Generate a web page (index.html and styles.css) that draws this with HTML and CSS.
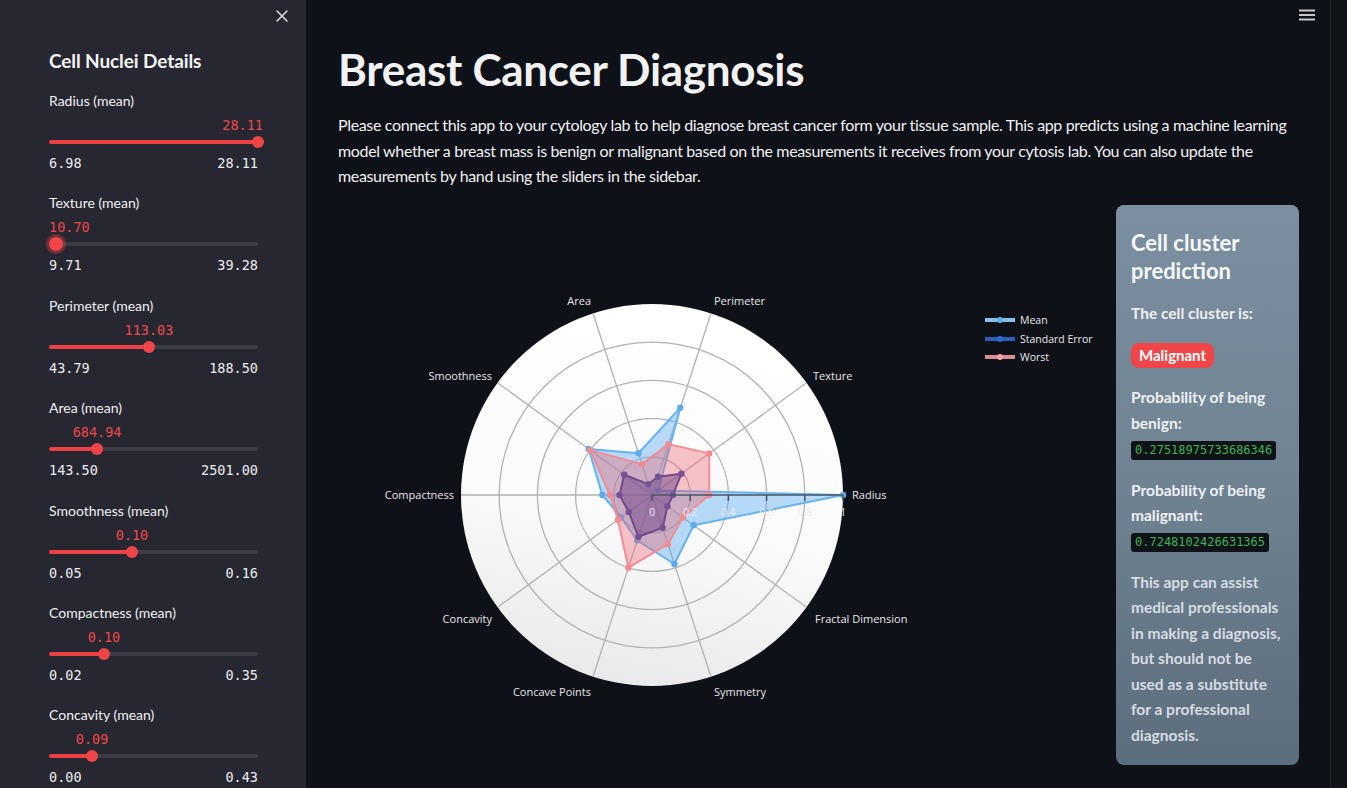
FILE: index.html
```html
<!DOCTYPE html>
<html lang="en">
<head>
<meta charset="utf-8">
<title>Breast Cancer Diagnosis</title>
<link rel="stylesheet" href="styles.css">
</head>
<body>
<div class="app">
  <aside class="sidebar">
    <div class="sidebar-head">
      <svg class="close-icon" width="14" height="14" viewBox="0 0 14 14"><path d="M2 2 L12 12 M12 2 L2 12" stroke="#d8d8dc" stroke-width="1.6" stroke-linecap="round"/></svg>
    </div>
    <div class="sidebar-body">
      <h2 class="sidebar-title">Cell Nuclei Details</h2>

      <div class="slider">
        <div class="slider-label">Radius (mean)</div>
        <div class="slider-value-row"><span class="slider-value at-end">28.11</span></div>
        <div class="track"><div class="track-rail"></div><div class="track-fill" style="width:100%"></div><div class="thumb" style="left:100%"></div></div>
        <div class="minmax"><span>6.98</span><span>28.11</span></div>
      </div>

      <div class="slider">
        <div class="slider-label">Texture (mean)</div>
        <div class="slider-value-row"><span class="slider-value at-start">10.70</span></div>
        <div class="track"><div class="track-rail"></div><div class="track-fill" style="width:3.3%"></div><div class="thumb focused" style="left:3.3%"></div></div>
        <div class="minmax"><span>9.71</span><span>39.28</span></div>
      </div>

      <div class="slider">
        <div class="slider-label">Perimeter (mean)</div>
        <div class="slider-value-row"><span class="slider-value" style="left:47.8%">113.03</span></div>
        <div class="track"><div class="track-rail"></div><div class="track-fill" style="width:47.8%"></div><div class="thumb" style="left:47.8%"></div></div>
        <div class="minmax"><span>43.79</span><span>188.50</span></div>
      </div>

      <div class="slider">
        <div class="slider-label">Area (mean)</div>
        <div class="slider-value-row"><span class="slider-value" style="left:23%">684.94</span></div>
        <div class="track"><div class="track-rail"></div><div class="track-fill" style="width:23%"></div><div class="thumb" style="left:23%"></div></div>
        <div class="minmax"><span>143.50</span><span>2501.00</span></div>
      </div>

      <div class="slider">
        <div class="slider-label">Smoothness (mean)</div>
        <div class="slider-value-row"><span class="slider-value" style="left:39.7%">0.10</span></div>
        <div class="track"><div class="track-rail"></div><div class="track-fill" style="width:39.7%"></div><div class="thumb" style="left:39.7%"></div></div>
        <div class="minmax"><span>0.05</span><span>0.16</span></div>
      </div>

      <div class="slider">
        <div class="slider-label">Compactness (mean)</div>
        <div class="slider-value-row"><span class="slider-value" style="left:26.3%">0.10</span></div>
        <div class="track"><div class="track-rail"></div><div class="track-fill" style="width:26.3%"></div><div class="thumb" style="left:26.3%"></div></div>
        <div class="minmax"><span>0.02</span><span>0.35</span></div>
      </div>

      <div class="slider">
        <div class="slider-label">Concavity (mean)</div>
        <div class="slider-value-row"><span class="slider-value" style="left:20.6%">0.09</span></div>
        <div class="track"><div class="track-rail"></div><div class="track-fill" style="width:20.6%"></div><div class="thumb" style="left:20.6%"></div></div>
        <div class="minmax"><span>0.00</span><span>0.43</span></div>
      </div>
    </div>
  </aside>

  <main class="main">
    <div class="topbar">
      <svg class="menu-icon" width="16" height="12" viewBox="0 0 16 12"><rect x="0" y="0.5" width="16" height="2" fill="#c8c8cc"/><rect x="0" y="5" width="16" height="2" fill="#c8c8cc"/><rect x="0" y="9.5" width="16" height="2" fill="#c8c8cc"/></svg>
    </div>
    <div class="content">
      <h1 class="title">Breast Cancer Diagnosis</h1>
      <p class="intro">Please connect this app to your cytology lab to help diagnose breast cancer form your tissue sample. This app predicts using a machine learning<br>model whether a breast mass is benign or malignant based on the measurements it receives from your cytosis lab. You can also update the<br>measurements by hand using the sliders in the sidebar.</p>

      <div class="columns">
        <div class="chart-col">
          <svg class="radar" width="762" height="560" viewBox="0 0 762 560">
            <defs>
              <linearGradient id="polarBg" x1="0.2" y1="0" x2="0" y2="1">
                <stop offset="0" stop-color="#ffffff"/>
                <stop offset="0.5" stop-color="#fafafa"/>
                <stop offset="1" stop-color="#e6e6e6"/>
              </linearGradient>
            </defs>
            <circle cx="314" cy="290" r="191" fill="url(#polarBg)"/>
            <g stroke="#b2b2b2" stroke-width="1.3" fill="none">
              <circle cx="314" cy="290" r="38.2"/>
              <circle cx="314" cy="290" r="76.4"/>
              <circle cx="314" cy="290" r="114.6"/>
              <circle cx="314" cy="290" r="152.8"/>
              <line x1="314" y1="290" x2="468.5" y2="177.7"/>
              <line x1="314" y1="290" x2="373" y2="108.3"/>
              <line x1="314" y1="290" x2="255" y2="108.3"/>
              <line x1="314" y1="290" x2="159.5" y2="177.7"/>
              <line x1="314" y1="290" x2="123" y2="290"/>
              <line x1="314" y1="290" x2="159.5" y2="402.3"/>
              <line x1="314" y1="290" x2="255" y2="471.7"/>
              <line x1="314" y1="290" x2="373" y2="471.7"/>
              <line x1="314" y1="290" x2="468.5" y2="402.3"/>
            </g>

            <!-- Mean -->
            <polygon points="505,290 320.2,285.5 342.3,202.8 300.4,248.2 250.7,244 264.3,290 283.1,312.5 299.2,335.4 336.4,359 355.7,320.3" fill="rgba(96,176,240,0.45)" stroke="#66b3ee" stroke-width="2" stroke-linejoin="round"/>
            <g fill="#5cacea">
              <circle cx="505" cy="290" r="3.2"/><circle cx="320.2" cy="285.5" r="3.2"/><circle cx="342.3" cy="202.8" r="3.2"/><circle cx="300.4" cy="248.2" r="3.2"/><circle cx="250.7" cy="244" r="3.2"/><circle cx="264.3" cy="290" r="3.2"/><circle cx="283.1" cy="312.5" r="3.2"/><circle cx="299.2" cy="335.4" r="3.2"/><circle cx="336.4" cy="359" r="3.2"/><circle cx="355.7" cy="320.3" r="3.2"/>
            </g>

            <!-- Standard Error -->
            <polygon points="335,290 343.4,268.7 319.9,271.8 310.4,279.1 286.2,269.8 281.5,290 290.8,306.9 300.4,331.8 324.6,322.7 329.5,301.2" fill="rgba(30,45,150,0.5)" stroke="#243a9a" stroke-width="2" stroke-linejoin="round"/>
            <g fill="#2a44a8">
              <circle cx="335" cy="290" r="3.2"/><circle cx="343.4" cy="268.7" r="3.2"/><circle cx="319.9" cy="271.8" r="3.2"/><circle cx="310.4" cy="279.1" r="3.2"/><circle cx="286.2" cy="269.8" r="3.2"/><circle cx="281.5" cy="290" r="3.2"/><circle cx="290.8" cy="306.9" r="3.2"/><circle cx="300.4" cy="331.8" r="3.2"/><circle cx="324.6" cy="322.7" r="3.2"/><circle cx="329.5" cy="301.2" r="3.2"/>
            </g>

            <!-- Worst -->
            <polygon points="371.3,290 371.2,248.4 330.5,239.1 304,259.1 252.2,245.1 272,290 280,314.7 290.4,362.7 329.9,339.1 344.9,312.5" fill="rgba(240,100,112,0.38)" stroke="#f28c94" stroke-width="2" stroke-linejoin="round"/>
            <g fill="#f48a92">
              <circle cx="371.3" cy="290" r="3.2"/><circle cx="371.2" cy="248.4" r="3.2"/><circle cx="330.5" cy="239.1" r="3.2"/><circle cx="304" cy="259.1" r="3.2"/><circle cx="252.2" cy="245.1" r="3.2"/><circle cx="272" cy="290" r="3.2"/><circle cx="280" cy="314.7" r="3.2"/><circle cx="290.4" cy="362.7" r="3.2"/><circle cx="329.9" cy="339.1" r="3.2"/><circle cx="344.9" cy="312.5" r="3.2"/>
            </g>

            <!-- radial axis -->
            <g stroke="#4a5564" stroke-width="1.5">
              <line x1="314" y1="290" x2="505" y2="290"/>
              <line x1="314" y1="290" x2="314" y2="296"/>
              <line x1="352.2" y1="290" x2="352.2" y2="296"/>
              <line x1="390.4" y1="290" x2="390.4" y2="296"/>
              <line x1="428.6" y1="290" x2="428.6" y2="296"/>
              <line x1="466.8" y1="290" x2="466.8" y2="296"/>
              <line x1="505" y1="290" x2="505" y2="296"/>
            </g>
            <g class="tick-label" text-anchor="middle">
              <text x="314" y="311">0</text>
              <text x="352.2" y="311">0.2</text>
              <text x="390.4" y="311">0.4</text>
              <text x="428.6" y="311">0.6</text>
              <text x="466.8" y="311">0.8</text>
              <text x="505" y="311">1</text>
            </g>

            <!-- angular labels -->
            <g class="axis-label">
              <text x="514" y="294">Radius</text>
              <text x="475" y="175">Texture</text>
              <text x="376" y="100">Perimeter</text>
              <text x="253" y="100" text-anchor="end">Area</text>
              <text x="154" y="175" text-anchor="end">Smoothness</text>
              <text x="116" y="294" text-anchor="end">Compactness</text>
              <text x="154" y="418" text-anchor="end">Concavity</text>
              <text x="253" y="491" text-anchor="end">Concave Points</text>
              <text x="376" y="491">Symmetry</text>
              <text x="477" y="418">Fractal Dimension</text>
            </g>

            <!-- legend -->
            <g class="legend">
              <rect x="647" y="113" width="30" height="4" fill="#86bfe9"/>
              <circle cx="662" cy="115" r="3" fill="#5cb2f0"/>
              <text x="682" y="119">Mean</text>
              <rect x="647" y="132" width="30" height="4" fill="#2f5fb5"/>
              <circle cx="662" cy="134" r="3" fill="#2a6ad8"/>
              <text x="682" y="138">Standard Error</text>
              <rect x="647" y="150" width="30" height="4" fill="#d98c94"/>
              <circle cx="662" cy="152" r="3" fill="#f4a2aa"/>
              <text x="682" y="156">Worst</text>
            </g>
          </svg>
        </div>

        <section class="card">
          <h3 class="card-title">Cell cluster<br>prediction</h3>
          <p class="card-text first">The cell cluster is:</p>
          <span class="badge">Malignant</span>
          <p class="card-text">Probability of being<br>benign:</p>
          <code class="prob">0.27518975733686346</code>
          <p class="card-text second">Probability of being<br>malignant:</p>
          <code class="prob">0.7248102426631365</code>
          <p class="card-note">This app can assist<br>medical professionals<br>in making a diagnosis,<br>but should not be<br>used as a substitute<br>for a professional<br>diagnosis.</p>
        </section>
      </div>
    </div>
  </main>
  <div class="scroll-strip"></div>
</div>
</body>
</html>
```

FILE: styles.css
```css
* {
  box-sizing: border-box;
  margin: 0;
  padding: 0;
}

html, body {
  height: 100%;
}

body {
  background: #0e1117;
  color: #fafafa;
  font-family: "Lato", "Liberation Sans", sans-serif;
  overflow: hidden;
}

.app {
  display: flex;
  height: 788px;
}

/* ---------- sidebar ---------- */
.sidebar {
  width: 306px;
  flex: none;
  background: #262730;
}

.sidebar-head {
  height: 32px;
  display: flex;
  justify-content: flex-end;
  align-items: center;
  padding-right: 17px;
}

.sidebar-body {
  padding: 0 48px 0 49px;
}

.sidebar-title {
  font-size: 19px;
  font-weight: 700;
  line-height: 26px;
  margin-top: 16px;
  margin-bottom: 17px;
  color: #f4f4f6;
  letter-spacing: -0.1px;
}

.slider {
  margin-bottom: 20.4px;
}

.slider-label {
  font-size: 14px;
  line-height: 20px;
  color: #f0f0f2;
}

.slider-value-row {
  position: relative;
  height: 20px;
  margin-top: 4px;
}

.slider-value {
  position: absolute;
  top: 0;
  transform: translateX(-50%);
  font-family: "DejaVu Sans Mono", "Liberation Mono", monospace;
  font-size: 13.5px;
  line-height: 20px;
  color: #f0474a;
  white-space: nowrap;
}

.slider-value.at-start {
  left: 0;
  transform: none;
}

.slider-value.at-end {
  right: -5px;
  transform: none;
}

.track {
  position: relative;
  height: 14px;
}

.track-rail {
  position: absolute;
  left: 0;
  right: 0;
  top: 5px;
  height: 4px;
  border-radius: 2px;
  background: #3c3d46;
}

.track-fill {
  position: absolute;
  left: 0;
  top: 5px;
  height: 4px;
  border-radius: 2px;
  background: #ee4146;
}

.thumb {
  position: absolute;
  top: 1px;
  width: 12px;
  height: 12px;
  border-radius: 50%;
  background: #f04449;
  transform: translateX(-50%);
}

.thumb.focused {
  top: 0;
  width: 14px;
  height: 14px;
  box-shadow: 0 0 0 3px rgba(240, 68, 73, 0.35);
}

.minmax {
  display: flex;
  justify-content: space-between;
  margin-top: 4px;
  font-family: "DejaVu Sans Mono", "Liberation Mono", monospace;
  font-size: 13.5px;
  line-height: 20px;
  color: #ececef;
}

/* ---------- main ---------- */
.main {
  flex: 1;
  min-width: 0;
  display: flex;
  flex-direction: column;
}

.topbar {
  height: 30px;
  display: flex;
  justify-content: flex-end;
  align-items: center;
  padding-right: 15px;
}

.content {
  padding: 0 31px 0 32px;
}

.title {
  font-size: 44px;
  font-weight: 700;
  line-height: 53px;
  margin-top: 13px;
  color: #f2f2f4;
  letter-spacing: -0.3px;
}

.intro {
  margin-top: 16px;
  font-size: 16px;
  line-height: 25.6px;
  letter-spacing: -0.35px;
  color: #f0f0f2;
  white-space: nowrap;
}

.columns {
  display: flex;
  margin-top: 16px;
}

.chart-col {
  flex: 1;
  min-width: 0;
}

.radar {
  display: block;
}

.axis-label text {
  font-family: "Open Sans", "Liberation Sans", sans-serif;
  font-size: 11px;
  fill: #e6e6e8;
}

.tick-label text {
  font-family: "Open Sans", "Liberation Sans", sans-serif;
  font-size: 10px;
  fill: #ececec;
}

.legend text {
  font-family: "Open Sans", "Liberation Sans", sans-serif;
  font-size: 10.5px;
  fill: #e8e8ea;
}

/* ---------- prediction card ---------- */
.card {
  width: 183px;
  height: 560px;
  flex: none;
  border-radius: 8px;
  background: linear-gradient(180deg, #7b8fa0 0%, #6f8393 50%, #5c6d7c 100%);
  padding: 24px 10px 0 15px;
  display: flex;
  flex-direction: column;
  align-items: flex-start;
}

.card-title {
  font-size: 22px;
  font-weight: 700;
  line-height: 28px;
  color: #f7f8f9;
}

.card-text {
  font-size: 15.5px;
  font-weight: 700;
  line-height: 25.6px;
  color: #eef0f2;
  margin-top: 17px;
  white-space: nowrap;
}

.card-text.first {
  margin-top: 16px;
}

.card-text.second {
  margin-top: 18px;
}

.badge {
  display: inline-block;
  margin-top: 17px;
  height: 25px;
  line-height: 25px;
  padding: 0 8px;
  border-radius: 8px;
  background: #f04649;
  color: #fff;
  font-size: 15px;
  font-weight: 700;
}

.prob {
  display: inline-block;
  margin-top: 4px;
  height: 19px;
  line-height: 19px;
  padding: 0 4px;
  border-radius: 3px;
  background: #0f1216;
  color: #3cb35a;
  font-family: "DejaVu Sans Mono", "Liberation Mono", monospace;
  font-size: 12px;
}

.card-note {
  margin-top: 18px;
  font-size: 15.5px;
  font-weight: 700;
  line-height: 25.5px;
  color: #d6dce1;
  white-space: nowrap;
}

/* ---------- scrollbar strip ---------- */
.scroll-strip {
  width: 17px;
  flex: none;
  background: #101318;
  border-left: 1px solid #1d2027;
}
```
